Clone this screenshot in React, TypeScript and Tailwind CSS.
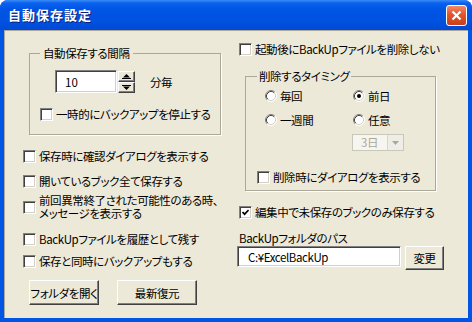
import React from 'react';

const CheckBox = ({ checked = false }: { checked?: boolean }) => (
  <span className="w-[13px] h-[13px] shrink-0 flex items-center justify-center bg-white border border-t-[#808080] border-l-[#808080] border-b-white border-r-white shadow-[inset_1px_1px_0_#404040,inset_-1px_-1px_0_#d4d0c8]">
    {checked && (
      <svg width="7" height="7" viewBox="0 0 7 7">
        <path d="M0.5 3 L2.6 5.2 L6.6 1" stroke="#000" strokeWidth="1.7" fill="none" />
      </svg>
    )}
  </span>
);

const Radio = ({ checked = false }: { checked?: boolean }) => (
  <svg width="12" height="12" viewBox="0 0 12 12" className="shrink-0">
    <circle cx="6" cy="6" r="5" fill="#fff" />
    <path d="M2.11 9.89 A5.5 5.5 0 0 1 9.89 2.11" stroke="#808080" fill="none" />
    <path d="M9.89 2.11 A5.5 5.5 0 0 1 2.11 9.89" stroke="#fff" fill="none" />
    <path d="M2.82 9.18 A4.5 4.5 0 0 1 9.18 2.82" stroke="#404040" fill="none" />
    <path d="M9.18 2.82 A4.5 4.5 0 0 1 2.82 9.18" stroke="#d4d0c8" fill="none" />
    {checked && <circle cx="6" cy="6" r="2" fill="#000" />}
  </svg>
);

const CheckRow = ({
  label,
  checked,
  className,
}: {
  label: string;
  checked?: boolean;
  className?: string;
}) => (
  <div className={`flex items-center gap-[3px] h-[14px] ${className || ''}`}>
    <CheckBox checked={checked} />
    <span className="whitespace-nowrap">{label}</span>
  </div>
);

const RadioRow = ({ label, checked }: { label: string; checked?: boolean }) => (
  <div className="flex items-center gap-[3px] h-[14px]">
    <Radio checked={checked} />
    <span>{label}</span>
  </div>
);

const SpinButton = ({ up }: { up?: boolean }) => (
  <div className="w-[17px] h-[11px] flex items-center justify-center bg-[#ece9d8] border border-t-white border-l-white border-b-[#404040] border-r-[#404040] shadow-[inset_-1px_-1px_0_#808080]">
    <svg width="9" height="5" viewBox="0 0 9 5">
      {up ? (
        <>
          <path d="M4.5 0 L8 3.5 L1 3.5 Z" fill="#000" />
          <rect x="0" y="4" width="9" height="1" fill="#000" />
        </>
      ) : (
        <>
          <rect x="0" y="0" width="9" height="1" fill="#000" />
          <path d="M1 1.5 L8 1.5 L4.5 5 Z" fill="#000" />
        </>
      )}
    </svg>
  </div>
);

const sunken =
  'bg-white border border-t-[#808080] border-l-[#808080] border-b-white border-r-white shadow-[inset_1px_1px_0_#404040,inset_-1px_-1px_0_#d4d0c8]';

const raised =
  'bg-[#ece9d8] border border-t-white border-l-white border-b-[#404040] border-r-[#404040] shadow-[inset_-1px_-1px_0_#808080] flex items-center justify-center whitespace-nowrap px-0';

export default function App() {
  return (
    <div className="w-[472px] h-[322px] flex flex-col bg-[#0055e5] rounded-t-[8px] overflow-hidden font-['Noto_Sans_CJK_JP',sans-serif] [font-feature-settings:'palt'] text-[11.5px] tracking-[-0.4px] leading-[14px] text-black">
      {/* タイトルバー */}
      <div className="h-[30px] shrink-0 flex items-center justify-between pl-[8px] pr-[5px] bg-[linear-gradient(180deg,#3b8cf5_0%,#0a62ef_10%,#0055e5_30%,#0052e0_70%,#0049d6_100%)]">
        <span className="text-white font-bold text-[13px] leading-[16px] tracking-[1px] [text-shadow:1px_1px_0_#0a1f7a]">
          自動保存設定
        </span>
        <div className="w-[21px] h-[21px] rounded-[3px] border border-white bg-[linear-gradient(180deg,#f08a6a_0%,#e0552c_45%,#c8401a_100%)] flex items-center justify-center">
          <svg width="11" height="11" viewBox="0 0 11 11">
            <path d="M1.5 1.5 L9.5 9.5 M9.5 1.5 L1.5 9.5" stroke="#fff" strokeWidth="2.2" />
          </svg>
        </div>
      </div>

      {/* 本体 */}
      <div className="flex-1 mx-[4px] mb-[4px] bg-[#ece9d8] border-t border-l border-[#aca899] flex">
        {/* 左側 */}
        <div className="w-[230px] pl-[18px] flex flex-col">
          <fieldset className="ml-[6px] mt-[15px] w-[192px] border border-[#aca899] shadow-[1px_1px_0_#fff] pl-[10px] pt-[10px] pb-[13px]">
            <legend className="px-[3px]">自動保存する間隔</legend>
            <div className="ml-[15px] flex items-center h-[23px]">
              <div className={`w-[62px] h-[23px] ${sunken} flex items-center pl-[9px] tracking-normal`}>10</div>
              <div className="flex flex-col ml-[1px]">
                <SpinButton up />
                <SpinButton />
              </div>
              <span className="ml-[15px]">分毎</span>
            </div>
            <CheckRow className="mt-[14px]" label="一時的にバックアップを停止する" />
          </fieldset>

          <CheckRow className="mt-[14px]" label="保存時に確認ダイアログを表示する" />
          <CheckRow className="mt-[11px]" label="開いているブック全て保存する" />
          <div className="mt-[6px] flex items-center gap-[3px]">
            <CheckBox />
            <div className="flex flex-col">
              <div className="h-[13px] leading-[13px] whitespace-nowrap">前回異常終了された可能性のある時、</div>
              <div className="h-[13px] leading-[13px] whitespace-nowrap">メッセージを表示する</div>
            </div>
          </div>
          <CheckRow className="mt-[12px]" label="BackUpファイルを履歴として残す" />
          <CheckRow className="mt-[8px]" label="保存と同時にバックアップもする" />

          <div className="ml-[6px] mt-[12px] flex gap-[18px]">
            <button className={`w-[70px] h-[25px] ${raised}`}>フォルダを開く</button>
            <button className={`w-[80px] h-[25px] ${raised}`}>最新復元</button>
          </div>
        </div>

        {/* 右側 */}
        <div className="pl-[4px] flex flex-col">
          <CheckRow className="mt-[11px]" label="起動後にBackUpファイルを削除しない" />

          <fieldset className="ml-[6px] mt-[13px] w-[191px] border border-[#aca899] shadow-[1px_1px_0_#fff] pl-[11px] pt-[6px] pb-[6px]">
            <legend className="px-[2px]">削除するタイミング</legend>
            <div className="ml-[8px] flex">
              <div className="w-[88px]">
                <RadioRow label="毎回" />
              </div>
              <RadioRow label="前日" checked />
            </div>
            <div className="ml-[8px] mt-[10px] flex">
              <div className="w-[88px]">
                <RadioRow label="一週間" />
              </div>
              <RadioRow label="任意" />
            </div>
            <div className="ml-[95px] mt-[7px] w-[52px] h-[17px] flex border border-[#c9c7ba] bg-[#f6f5ef]">
              <span className="flex-1 pl-[8px] text-[#aca899] leading-[15px]">3日</span>
              <div className="w-[16px] h-[15px] border-l border-[#d8d6ca] bg-[#efeee6] flex items-center justify-center">
                <svg width="7" height="4" viewBox="0 0 7 4">
                  <path d="M0 0 L7 0 L3.5 4 Z" fill="#aca899" />
                </svg>
              </div>
            </div>
            <CheckRow className="mt-[19px]" label="削除時にダイアログを表示する" />
          </fieldset>

          <CheckRow className="mt-[14px]" label="編集中で未保存のブックのみ保存する" checked />
          <div className="mt-[12px] h-[14px]">BackUpフォルダのパス</div>
          <div className="mt-[1px] ml-[-2px] flex items-start gap-[4px]">
            <div className={`w-[164px] h-[21px] ${sunken} flex items-center pl-[10px]`}>C:¥ExcelBackUp</div>
            <button className={`w-[39px] h-[24px] ${raised}`}>変更</button>
          </div>
        </div>
      </div>
    </div>
  );
}
